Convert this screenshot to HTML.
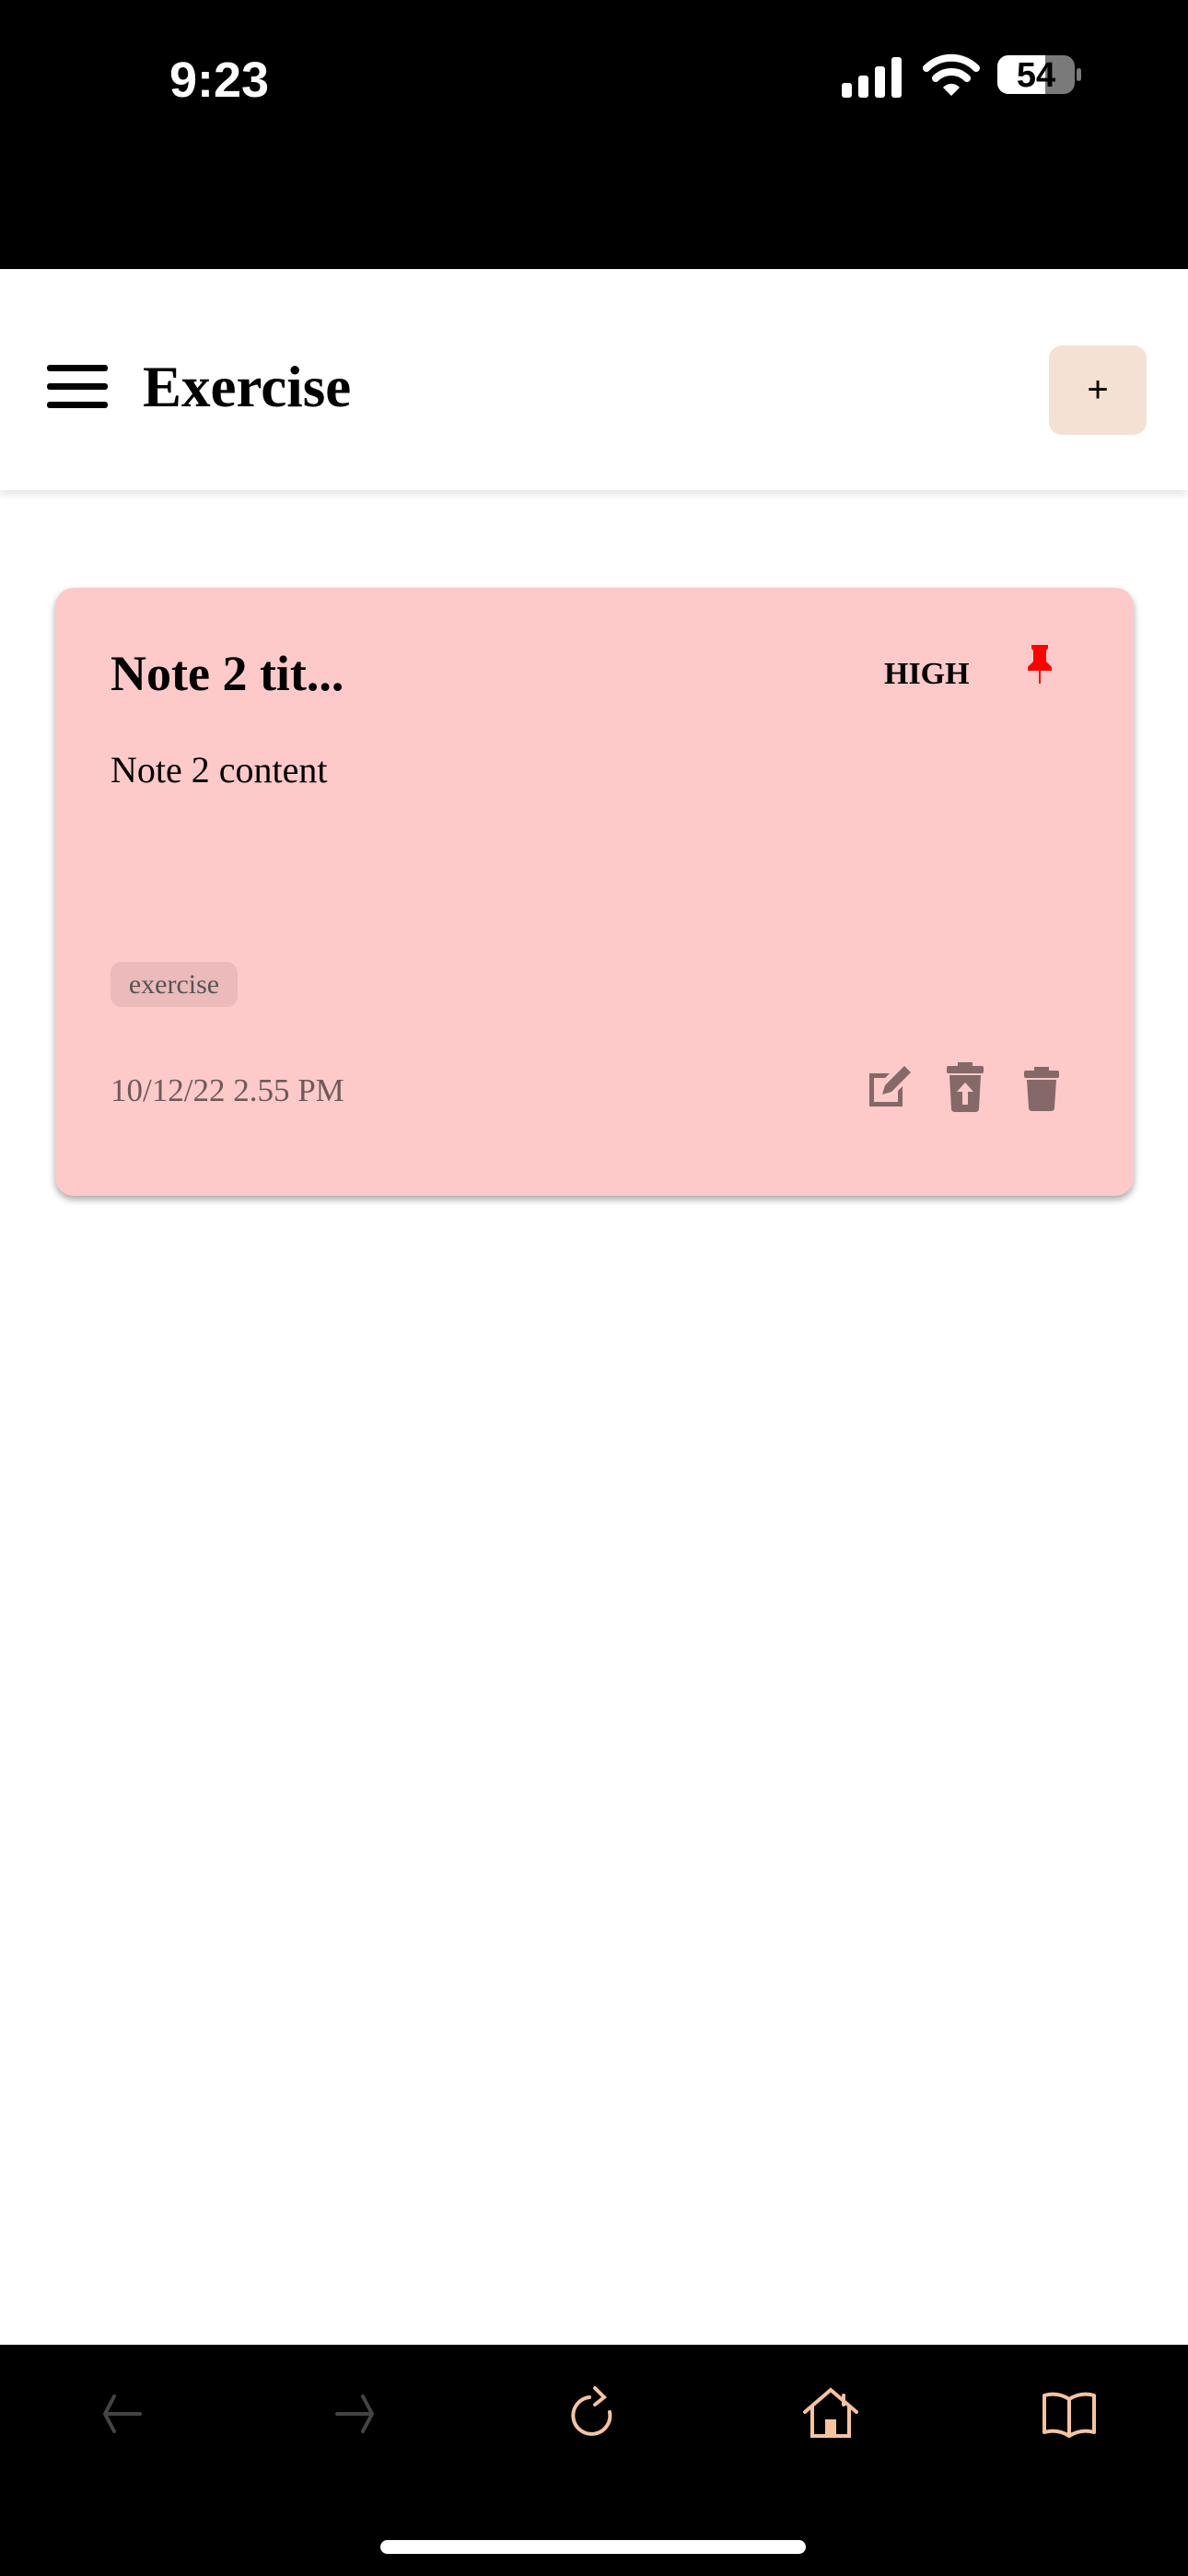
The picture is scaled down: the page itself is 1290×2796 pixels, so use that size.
<!DOCTYPE html>
<html><head><meta charset="utf-8"><style>
*{margin:0;padding:0;box-sizing:border-box}
body{width:1290px;height:2796px;background:#fff;position:relative;overflow:hidden;font-family:"Liberation Serif",serif}
.abs{position:absolute}
</style></head><body>
<div class="abs" style="left:0;top:0;width:1290px;height:292px;background:#000"></div>
<div class="abs" style="left:184px;top:56px;color:#fff;font:600 54px 'Liberation Sans',sans-serif">9:23</div>
<svg class="abs" style="left:912px;top:60px" width="72" height="48"><rect x="2" y="30" width="11" height="16" rx="3" fill="#fff"/><rect x="20" y="22" width="11" height="24" rx="3" fill="#fff"/><rect x="38" y="12" width="11" height="34" rx="3" fill="#fff"/><rect x="56" y="2" width="11" height="44" rx="3" fill="#fff"/></svg>
<svg class="abs" style="left:1002px;top:58px" width="62" height="48" viewBox="0 0 62 48"><path d="M4 16 A38 38 0 0 1 58 16" stroke="#fff" stroke-width="8" fill="none" stroke-linecap="round"/><path d="M14 27 A24 24 0 0 1 48 27" stroke="#fff" stroke-width="8" fill="none" stroke-linecap="round"/><path d="M22 37 L31 46 L40 37 A12 12 0 0 0 22 37Z" fill="#fff"/></svg>
<div class="abs" style="left:1083px;top:60px;width:84px;height:42px;border-radius:12px;background:#7a7a7a;overflow:hidden"><div style="width:52px;height:42px;background:#fff"></div></div>
<div class="abs" style="left:1169px;top:74px;width:5px;height:14px;border-radius:3px;background:#7a7a7a"></div>
<div class="abs" style="left:1083px;top:60px;width:84px;height:44px;text-align:center;font:700 38px/44px 'Liberation Sans',sans-serif;color:#000">54</div>

<div class="abs" style="left:0;top:292px;width:1290px;height:240px;background:#fff;box-shadow:0 4px 10px rgba(0,0,0,.12)"></div>
<div class="abs" style="left:51px;top:396px;width:66px;height:7px;background:#000;border-radius:3px"></div>
<div class="abs" style="left:51px;top:416px;width:66px;height:7px;background:#000;border-radius:3px"></div>
<div class="abs" style="left:51px;top:436px;width:66px;height:7px;background:#000;border-radius:3px"></div>
<div class="abs" style="left:155px;top:384px;font:700 63px 'Liberation Serif',serif;color:#000">Exercise</div>
<div class="abs" style="left:1139px;top:375px;width:106px;height:97px;background:#f5e1d3;border-radius:14px;text-align:center;font:400 40px/97px 'Liberation Sans',sans-serif;color:#000">+</div>

<div class="abs" style="left:60px;top:638px;width:1171px;height:660px;background:#fdc9c9;border-radius:20px;box-shadow:0 4px 8px rgba(0,0,0,.35)"></div>
<div class="abs" style="left:120px;top:700px;font:700 54px 'Liberation Serif',serif;color:#000">Note 2 tit...</div>
<div class="abs" style="left:960px;top:713px;font:700 34px 'Liberation Serif',serif;color:#000">HIGH</div>
<svg class="abs" style="left:1112px;top:698px" width="34" height="46" viewBox="0 0 34 46"><path d="M8 2H26V6L24 8V20L30 26V30H4V26L10 20V8L8 6Z" fill="#f00"/><rect x="16" y="30" width="2" height="14" fill="#f00"/></svg>
<div class="abs" style="left:120px;top:812px;font:400 40px 'Liberation Serif',serif;color:#000">Note 2 content</div>
<div class="abs" style="left:120px;top:1044px;width:138px;height:49px;background:#ebbaba;border-radius:12px;text-align:center;font:400 30px/49px 'Liberation Serif',serif;color:#555">exercise</div>
<div class="abs" style="left:120px;top:1164px;font:400 35px 'Liberation Serif',serif;color:#6d5a5a">10/12/22 2.55 PM</div>
<svg class="abs" style="left:940px;top:1155px" width="52" height="50" viewBox="0 0 52 50"><path d="M4 10H26L21 15H9V41H35V29L40 24V46H4Z" fill="#856868"/><path d="M42 2L49 9L28 30L18 33L21 23Z" fill="#856868"/></svg>
<svg class="abs" style="left:1028px;top:1153px" width="40" height="54" viewBox="0 0 40 54"><rect x="12" y="0" width="16" height="5" fill="#856868"/><rect x="0" y="4" width="40" height="8" rx="2" fill="#856868"/><path d="M3 14H37L35 50Q35 54 31 54H9Q5 54 5 50Z" fill="#856868"/><path d="M20 22L29 32H23V46H17V32H11Z" fill="#fdc9c9"/></svg>
<svg class="abs" style="left:1112px;top:1158px" width="38" height="48" viewBox="0 0 38 48"><rect x="11" y="0" width="16" height="5" fill="#856868"/><rect x="0" y="4" width="38" height="8" rx="2" fill="#856868"/><path d="M3 14H35L33 44Q33 48 29 48H9Q5 48 5 44Z" fill="#856868"/></svg>

<div class="abs" style="left:0;top:2545px;width:1290px;height:251px;background:#000"></div>
<svg class="abs" style="left:100px;top:2595px" width="60" height="50"><path d="M14 25H52M24 6L14 25L24 44" stroke="#444" stroke-width="4" fill="none" stroke-linecap="round"/></svg>
<svg class="abs" style="left:360px;top:2595px" width="60" height="50"><path d="M6 25H44M34 6L44 25L34 44" stroke="#444" stroke-width="4" fill="none" stroke-linecap="round"/></svg>
<svg class="abs" style="left:620px;top:2588px" width="60" height="60"><path d="M20 14A20 20 0 1 0 42 30" stroke="#f4c3a0" stroke-width="4" fill="none" stroke-linecap="round"/><path d="M26 4L36 14L26 22" stroke="#f4c3a0" stroke-width="4" fill="none" stroke-linecap="round"/></svg>
<svg class="abs" style="left:870px;top:2588px" width="64" height="62"><path d="M4 30L32 6L60 30M12 24V56H52V24M46 12V22" stroke="#f4c3a0" stroke-width="4" fill="none" stroke-linecap="round"/><rect x="26" y="38" width="12" height="18" fill="#f4c3a0"/></svg>
<svg class="abs" style="left:1130px;top:2594px" width="62" height="52"><path d="M31 10Q18 2 4 6V46Q18 42 31 50Q44 42 58 46V6Q44 2 31 10V50" stroke="#f4c3a0" stroke-width="4" fill="none" stroke-linejoin="round"/></svg>
<div class="abs" style="left:413px;top:2757px;width:462px;height:15px;background:#fff;border-radius:8px"></div>
</body></html>
